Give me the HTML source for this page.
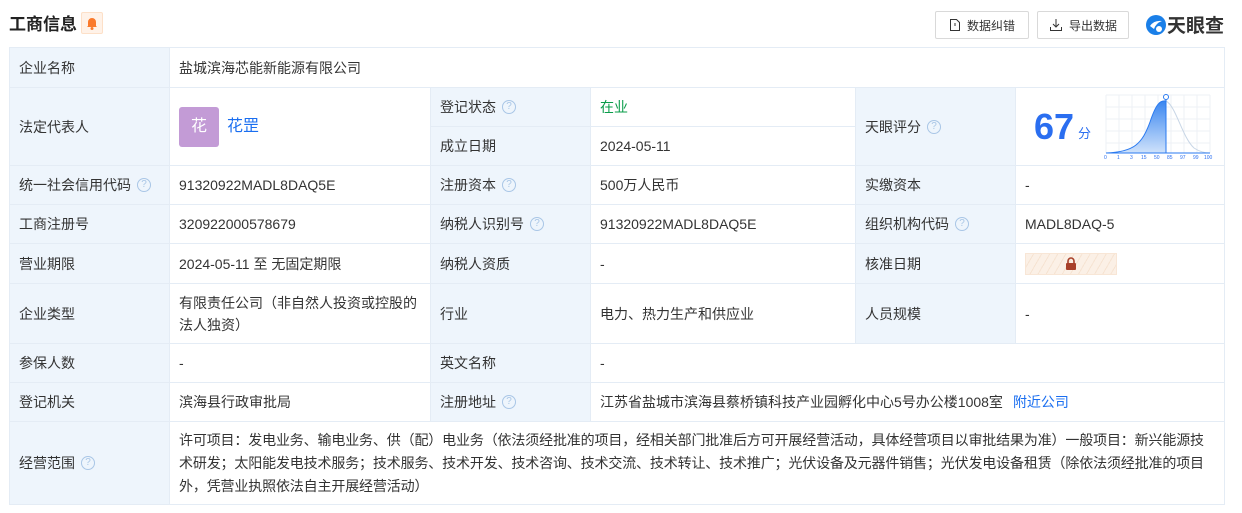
<!DOCTYPE html>
<html><head><meta charset="utf-8"><style>
*{margin:0;padding:0;box-sizing:border-box}
body{width:1242px;height:513px;background:#fff;font-family:"Liberation Sans","Noto Sans CJK SC",sans-serif;font-size:14px;color:#333;position:relative;overflow:hidden}
.c{position:absolute;border-right:1px solid #e4ecf5;border-bottom:1px solid #e4ecf5;display:flex;align-items:center;padding-left:9px;line-height:22px}
.l{background:#eef5fc}
.q{display:inline-block;width:14px;height:14px;border:1px solid #a9c6e6;border-radius:50%;color:#a9c6e6;font-size:10px;line-height:12px;text-align:center;margin-left:6px}
.btn{position:absolute;top:11px;height:28px;border:1px solid #d9d9d9;border-radius:2px;font-size:12px;color:#333;display:flex;align-items:center;justify-content:center;gap:6px}
</style></head><body>
<div style="position:absolute;left:9px;top:10px;font-size:17px;font-weight:bold;color:#222">工商信息</div>
<div style="position:absolute;left:81px;top:12px;width:22px;height:22px;background:#fff2e8;border:1px solid #fde0c8;border-radius:2px"><svg width="20" height="20" viewBox="0 0 20 20"><path d="M6 13 V9 a4 4 0 0 1 8 0 V13 L15 14 H5 Z" fill="#fa7a2c"/><circle cx="10" cy="15.5" r="1.5" fill="#fa7a2c"/></svg></div>
<div class="btn" style="left:935px;width:94px"><svg width="12" height="14" viewBox="0 0 12 14"><path d="M1.5 1.5h6l3 3v8h-9z" fill="none" stroke="#333"/><path d="M6 5v3" stroke="#333"/></svg>数据纠错</div>
<div class="btn" style="left:1037px;width:92px"><svg width="14" height="14" viewBox="0 0 14 14"><path d="M7 1v8M4 6l3 3 3-3M1.5 9v3.5h11V9" fill="none" stroke="#333"/></svg>导出数据</div>
<div style="position:absolute;left:1145px;top:11px;display:flex;align-items:center;font-size:19px;font-weight:bold;color:#333"><svg width="22" height="22" viewBox="0 0 22 22"><circle cx="11" cy="11" r="10" fill="#1a7fe8"/><path d="M5 12 Q9 6 17 7 Q11 9 9 15 Z" fill="#fff"/><circle cx="14" cy="15" r="3" fill="#fff"/></svg>天眼查</div>

<div style="position:absolute;left:9px;top:47px;width:1216px;height:458px;border-left:1px solid #e4ecf5;border-top:1px solid #e4ecf5"></div>
<div class="c l" style="left:10px;top:48px;width:160px;height:40px">企业名称</div>
<div class="c" style="left:170px;top:48px;width:1055px;height:40px">盐城滨海芯能新能源有限公司</div>
<div class="c l" style="left:10px;top:88px;width:160px;height:78px">法定代表人</div>
<div class="c" style="left:170px;top:88px;width:261px;height:78px"><span style="width:40px;height:40px;background:#c39bd6;border-radius:3px;color:#fff;font-size:16px;display:flex;align-items:center;justify-content:center">花</span><span style="color:#1a6ef0;font-size:16px;margin-left:8px">花罡</span></div>
<div class="c l" style="left:431px;top:88px;width:160px;height:39px">登记状态<span class="q">?</span></div>
<div class="c" style="left:591px;top:88px;width:265px;height:39px;color:#0a9c4a">在业</div>
<div class="c l" style="left:431px;top:127px;width:160px;height:39px">成立日期</div>
<div class="c" style="left:591px;top:127px;width:265px;height:39px">2024-05-11</div>
<div class="c l" style="left:856px;top:88px;width:160px;height:78px">天眼评分<span class="q">?</span></div>
<div class="c" style="left:1016px;top:88px;width:209px;height:78px;padding-left:18px"><span style="color:#2a6ef0;font-size:36px;font-weight:bold">67</span><span style="color:#2a6ef0;font-size:13px;margin:14px 0 0 4px">分</span>
<svg style="position:absolute;left:88px;top:4px" width="110" height="68" viewBox="0 0 110 68">
<g stroke="#eef1f5" stroke-width="1"><path d="M2 3H106M2 15H106M2 27H106M2 39H106M2 51H106"/><path d="M2 3V61M15 3V61M28 3V61M41 3V61M54 3V61M67 3V61M80 3V61M93 3V61M106 3V61"/></g>
<defs><linearGradient id="g" x1="0" y1="0" x2="0" y2="1"><stop offset="0" stop-color="#3a86f0"/><stop offset="1" stop-color="#cfe2fb"/></linearGradient></defs>
<path d="M2 61 C30 60 38 52 46 30 C52 12 56 8 62 9 L62 61Z" fill="url(#g)"/>
<path d="M62 9 C72 14 78 45 90 56 C96 60 102 61 106 61" fill="none" stroke="#c8d6e6"/>
<path d="M2 61 C30 60 38 52 46 30 C52 12 56 8 62 9" fill="none" stroke="#2a7af0"/>
<path d="M62 6V61M2 61H106" stroke="#2a7af0"/><circle cx="62" cy="5" r="2.5" fill="#fff" stroke="#2a7af0"/>
<text y="67" font-size="5" fill="#2a6ef0" font-family="Liberation Sans"><tspan x="0">0</tspan><tspan x="13">1</tspan><tspan x="26">3</tspan><tspan x="37">15</tspan><tspan x="50">50</tspan><tspan x="63">85</tspan><tspan x="76">97</tspan><tspan x="89">99</tspan><tspan x="100">100</tspan></text></svg></div>
<div class="c l" style="left:10px;top:166px;width:160px;height:39px">统一社会信用代码<span class="q">?</span></div>
<div class="c" style="left:170px;top:166px;width:261px;height:39px">91320922MADL8DAQ5E</div>
<div class="c l" style="left:431px;top:166px;width:160px;height:39px">注册资本<span class="q">?</span></div>
<div class="c" style="left:591px;top:166px;width:265px;height:39px">500万人民币</div>
<div class="c l" style="left:856px;top:166px;width:160px;height:39px">实缴资本</div>
<div class="c" style="left:1016px;top:166px;width:209px;height:39px">-</div>
<div class="c l" style="left:10px;top:205px;width:160px;height:39px">工商注册号</div>
<div class="c" style="left:170px;top:205px;width:261px;height:39px">320922000578679</div>
<div class="c l" style="left:431px;top:205px;width:160px;height:39px">纳税人识别号<span class="q">?</span></div>
<div class="c" style="left:591px;top:205px;width:265px;height:39px">91320922MADL8DAQ5E</div>
<div class="c l" style="left:856px;top:205px;width:160px;height:39px">组织机构代码<span class="q">?</span></div>
<div class="c" style="left:1016px;top:205px;width:209px;height:39px">MADL8DAQ-5</div>
<div class="c l" style="left:10px;top:244px;width:160px;height:40px">营业期限</div>
<div class="c" style="left:170px;top:244px;width:261px;height:40px">2024-05-11 至 无固定期限</div>
<div class="c l" style="left:431px;top:244px;width:160px;height:40px">纳税人资质</div>
<div class="c" style="left:591px;top:244px;width:265px;height:40px">-</div>
<div class="c l" style="left:856px;top:244px;width:160px;height:40px">核准日期</div>
<div class="c" style="left:1016px;top:244px;width:209px;height:40px"><span style="width:92px;height:22px;border:1px solid #f8e6d6;background:repeating-linear-gradient(120deg,#fbf0e6 0 6px,#f6e3d2 6px 7px);display:flex;align-items:center;justify-content:center"><svg width="12" height="13" viewBox="0 0 12 13"><path d="M3 6V4a3 3 0 0 1 6 0v2" fill="none" stroke="#a8402a" stroke-width="1.6"/><rect x="1" y="6" width="10" height="7" rx="1" fill="#a8402a"/></svg></span></div>
<div class="c l" style="left:10px;top:284px;width:160px;height:60px">企业类型</div>
<div class="c" style="left:170px;top:284px;width:261px;height:60px;padding-right:10px">有限责任公司（非自然人投资或控股的法人独资）</div>
<div class="c l" style="left:431px;top:284px;width:160px;height:60px">行业</div>
<div class="c" style="left:591px;top:284px;width:265px;height:60px">电力、热力生产和供应业</div>
<div class="c l" style="left:856px;top:284px;width:160px;height:60px">人员规模</div>
<div class="c" style="left:1016px;top:284px;width:209px;height:60px">-</div>
<div class="c l" style="left:10px;top:344px;width:160px;height:39px">参保人数</div>
<div class="c" style="left:170px;top:344px;width:261px;height:39px">-</div>
<div class="c l" style="left:431px;top:344px;width:160px;height:39px">英文名称</div>
<div class="c" style="left:591px;top:344px;width:634px;height:39px">-</div>
<div class="c l" style="left:10px;top:383px;width:160px;height:39px">登记机关</div>
<div class="c" style="left:170px;top:383px;width:261px;height:39px">滨海县行政审批局</div>
<div class="c l" style="left:431px;top:383px;width:160px;height:39px">注册地址<span class="q">?</span></div>
<div class="c" style="left:591px;top:383px;width:634px;height:39px">江苏省盐城市滨海县蔡桥镇科技产业园孵化中心5号办公楼1008室<span style="color:#1a6ef0;margin-left:10px">附近公司</span></div>
<div class="c l" style="left:10px;top:422px;width:160px;height:83px">经营范围<span class="q">?</span></div>
<div class="c" style="left:170px;top:422px;width:1055px;height:83px;padding-right:14px;line-height:23px;letter-spacing:-0.15px">许可项目：发电业务、输电业务、供（配）电业务（依法须经批准的项目，经相关部门批准后方可开展经营活动，具体经营项目以审批结果为准）一般项目：新兴能源技术研发；太阳能发电技术服务；技术服务、技术开发、技术咨询、技术交流、技术转让、技术推广；光伏设备及元器件销售；光伏发电设备租赁（除依法须经批准的项目外，凭营业执照依法自主开展经营活动）</div>
</body></html>
